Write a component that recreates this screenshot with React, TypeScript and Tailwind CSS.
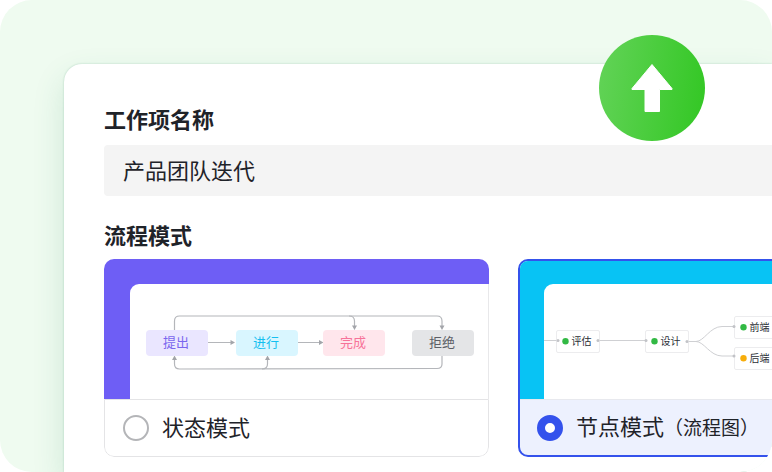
import React, { useState } from 'react';

type Mode = 'state' | 'node';

const stateNodes = [
  { label: '提出', x: 16, fill: '#eae6ff', color: '#7b67ee' },
  { label: '进行', x: 106, fill: '#d9f6ff', color: '#14bff0' },
  { label: '完成', x: 193, fill: '#ffe6ec', color: '#f77399' },
  { label: '拒绝', x: 282, fill: '#e4e5e7', color: '#5c5f66' },
];

const flowNodes = [
  { label: '评估', x: 12, y: 46, dot: '#32b944' },
  { label: '设计', x: 101, y: 46, dot: '#32b944' },
  { label: '前端', x: 190, y: 32, dot: '#32b944' },
  { label: '后端', x: 190, y: 63, dot: '#f7ad0a' },
];

const ports = [
  [14, 56.5],
  [54, 56.5],
  [102, 56.5],
  [143, 57.5],
  [190, 42.5],
  [190, 72],
];

const StateDiagram: React.FC = () => (
  <svg width="358" height="115" viewBox="0 0 358 115" className="block" aria-hidden="true">
    <g fill="none" stroke="#b4b6ba" strokeWidth="1.2">
      <path d="M44.5 46V37q0-5 5-5H307q5 0 5 5v6" />
      <path d="M219 32q5.500 0 5.500 5v6" />
      <path d="M312 72v8q0 4.500-5 4.500L49.500 85q-5 0-5-5v-4" />
      <path d="M132 85q5.500 0 5.500-5v-4" />
      <path d="M78 58.500h23M168 58.500h22" />
    </g>
    <g fill="#a3a5aa">
      <path d="M222 41.500h5l-2.500 4.500zM309.500 41.500h5L312 46z" />
      <path d="M42 76h5l-2.500-4.500zM135 76h5l-2.500-4.500z" />
      <path d="M100.500 56v5l4.500-2.500zM189 56v5l4.500-2.500z" />
    </g>
    {stateNodes.map(n => (
      <g key={n.label}>
        <rect x={n.x} y="46" width="62" height="26" rx="4" fill={n.fill} />
        <text x={n.x + 30} y="63" textAnchor="middle" fontSize="13" fill={n.color}>
          {n.label}
        </text>
      </g>
    ))}
  </svg>
);

const FlowDiagram: React.FC = () => (
  <svg width="357" height="115" viewBox="0 0 357 115" className="block" aria-hidden="true">
    <g fill="none" stroke="#cfd0d3" strokeWidth="1">
      <path d="M0 56.500h12M56 56.500h46M144 57.500h8" />
      <path d="M152 57.500C160 57.500 166 42.500 178 42.500H190" />
      <path d="M152 57.500C160 57.500 166 72 178 72H190" />
    </g>
    {flowNodes.map(n => (
      <g key={n.label}>
        <rect x={n.x + 0.5} y={n.y + 0.5} width="43" height="22" rx="1.500" fill="#fff" stroke="#ececee" />
        <circle cx={n.x + 9.5} cy={n.y + 11.3} r="3.200" fill={n.dot} />
        <text x={n.x + 15.5} y={n.y + 15} fontSize="10" fill="#2b2f36">
          {n.label}
        </text>
      </g>
    ))}
    {ports.map(([x, y]) => (
      <circle key={`${x}-${y}`} cx={x} cy={y} r="1.500" fill="#c2c3c7" />
    ))}
  </svg>
);

export default function App() {
  const [name, setName] = useState('产品团队迭代');
  const [mode, setMode] = useState<Mode>('node');

  return (
    <div className="relative flex min-h-screen overflow-hidden rounded-[32px] bg-[#effbf0] pt-16 pl-16 font-['Noto_Sans_CJK_SC',sans-serif] text-[#1f2329]">
      <main className="min-w-0 flex-1 rounded-tl-[18px] bg-white pt-[38px] pl-10 shadow-[0_0_2px_rgba(40,130,90,0.3),0_14px_32px_rgba(40,130,90,0.16)]">
        <label htmlFor="item-name" className="block text-[22px] leading-8 font-bold">
          工作项名称
        </label>
        <input
          id="item-name"
          value={name}
          onChange={e => setName(e.target.value)}
          className="mt-[11px] block h-[51px] w-full rounded-l-[4px] bg-[#f4f4f4] px-[19px] pb-1 text-[22px] outline-none"
        />

        <fieldset className="mt-[22px]">
          <legend className="block text-[22px] leading-8 font-bold">流程模式</legend>
          <div className="mt-[9px] flex gap-[29px]">
            {/* State mode */}
            <label className="w-[385px] shrink-0 cursor-pointer overflow-hidden rounded-[10px]">
              <div className="bg-[#6e5ef5] pt-[25px] pl-[26px]">
                <div className="overflow-hidden rounded-tl-[9px] border-r border-[#e8e8ea] bg-white">
                  <StateDiagram />
                </div>
              </div>
              <div className="flex h-[58px] items-center gap-[13px] rounded-b-[10px] border border-[#e4e4e6] bg-white pl-[18px]">
                <input
                  type="radio"
                  name="mode"
                  checked={mode === 'state'}
                  onChange={() => setMode('state')}
                  className="size-[26px] appearance-none rounded-full border-2 border-[#b4b5b8] bg-white checked:border-8 checked:border-[#3452ec]"
                />
                <span className="pb-1 text-[22px] leading-8">状态模式</span>
              </div>
            </label>

            {/* Node mode */}
            <label className="w-[385px] shrink-0 cursor-pointer overflow-hidden rounded-[10px] border-2 border-[#3452ec] bg-[#edf1fe]">
              <div className="bg-[#08c3f4] pt-[23px] pl-6">
                <div className="overflow-hidden rounded-tl-[9px] bg-white">
                  <FlowDiagram />
                </div>
              </div>
              <div className="flex h-14 items-center gap-[13px] border-t border-[#e8e9ee] pl-[17px]">
                <input
                  type="radio"
                  name="mode"
                  checked={mode === 'node'}
                  onChange={() => setMode('node')}
                  className="size-[26px] appearance-none rounded-full border-2 border-[#b4b5b8] bg-white checked:border-8 checked:border-[#3452ec]"
                />
                <span className="pb-1 text-[22px] leading-8">
                  节点模式<span className="text-[19px]">（流程图）</span>
                </span>
              </div>
            </label>
          </div>
        </fieldset>
      </main>

      {/* Upgrade badge */}
      <div className="absolute top-[35px] right-[67px] size-[106px] rounded-full bg-[linear-gradient(98deg,#63d358,#32c723)]">
        <svg viewBox="0 0 106 106" className="size-full" aria-hidden="true">
          <path
            d="M53 29.500L73 53.500V54.500H60.500V76.500H46V54.500H33V53.500z"
            fill="#fff"
            stroke="#fff"
            strokeWidth="1"
            strokeLinejoin="round"
          />
        </svg>
      </div>
    </div>
  );
}
